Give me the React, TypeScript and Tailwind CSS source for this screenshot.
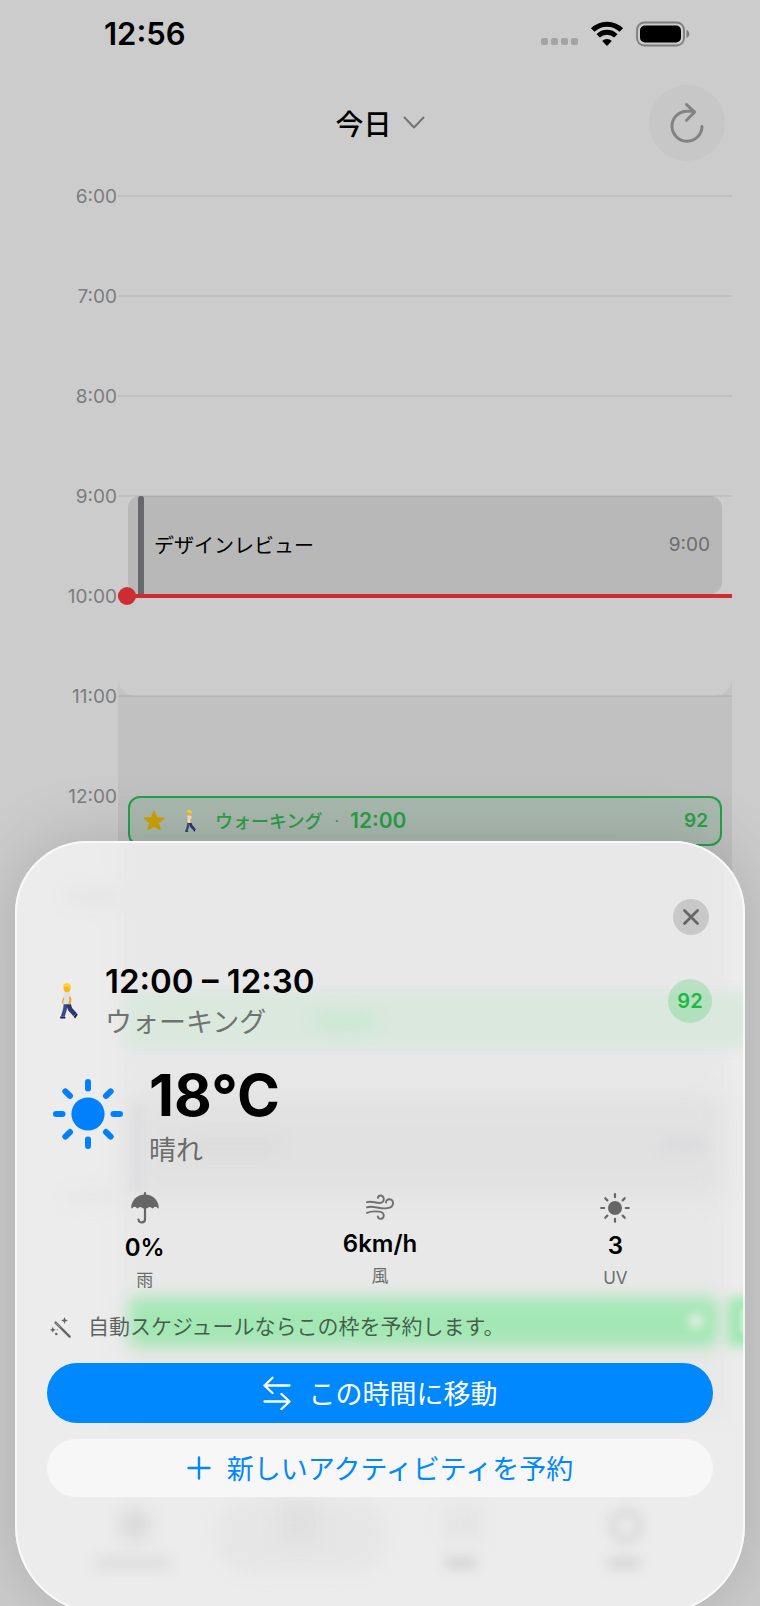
import type { ReactNode } from "react";

type HourRow = {
  label: string;
  kind?: "meeting" | "beforeShade" | "shade" | "activity";
};

const HOURS: HourRow[] = [
  { label: "6:00" },
  { label: "7:00" },
  { label: "8:00" },
  { label: "9:00", kind: "meeting" },
  { label: "10:00", kind: "beforeShade" },
  { label: "11:00", kind: "shade" },
  { label: "12:00", kind: "activity" },
];

const RAY_ANGLES = [0, 45, 90, 135, 180, 225, 270, 315];

// ── Icons ─────────────────────────────────────────────────────────────────────
function WifiIcon() {
  return (
    <svg width="34" height="26" viewBox="0 0 34 26" fill="none" aria-hidden="true">
      <path d="M2.700 9.100a20.200 20.200 0 0 1 28.600 0" stroke="#000" strokeWidth="5" />
      <path d="M8.200 14.900a12.400 12.400 0 0 1 17.600 0" stroke="#000" strokeWidth="4.800" />
      <path d="M12.200 19.900a6.800 6.800 0 0 1 9.600 0L17 24.900z" fill="#000" />
    </svg>
  );
}

function BatteryIcon() {
  return (
    <svg width="54" height="26" viewBox="0 0 54 26" fill="none" aria-hidden="true">
      <rect x="1" y="1.500" width="47" height="23" rx="7.500" stroke="#7d7d7d" strokeWidth="1.800" />
      <rect x="4" y="4.500" width="41" height="17" rx="5" fill="#000" />
      <path d="M50.500 9v8c1.800-.6 2.800-2.200 2.800-4s-1-3.400-2.800-4z" fill="#7d7d7d" />
    </svg>
  );
}

function RefreshIcon() {
  return (
    <svg
      width="34" height="42" viewBox="0 0 34 42" fill="none" aria-hidden="true"
      stroke="#828282" strokeWidth="3" strokeLinecap="round" strokeLinejoin="round"
    >
      <path d="M32 24.500a15 15 0 1 1-15-15.300h7" />
      <path d="M16.500 2.500l8 7.700-8 8" />
    </svg>
  );
}

function WalkerIcon({ className }: { className: string }) {
  return (
    <svg className={className} viewBox="0 0 18 36" fill="none" aria-hidden="true">
      <path d="M5.800 19.500L5 26l-2.200 7.500" stroke="#3a4b8c" strokeWidth="3.800" strokeLinejoin="round" />
      <path d="M7.800 19.500l2.400 6.700 5 5.500" stroke="#2b3873" strokeWidth="4.600" strokeLinejoin="round" />
      <path d="M.3 33.200l5 .8v1.600H.2z" fill="#1c1d3d" />
      <path d="M13.600 33.800l2.800-3.300 1.400 1-2.600 3.900z" fill="#1c1d3d" />
      <path d="M4.200 9.200c2-1 5.300-.8 6.300.6l.5 10.200-1.200 1.200H4L3.400 19z" fill="#dfe2e8" />
      <path d="M3.700 15l-1.300 5" stroke="#e9a81c" strokeWidth="1.200" strokeLinecap="round" />
      <path d="M9.900 14.500l.5 2.800-.9 3" stroke="#f3b01e" strokeWidth="2.200" strokeLinecap="round" />
      <ellipse cx="7" cy="5" rx="3.500" ry="4.200" fill="#f8b61d" />
      <path d="M3 3.600C3 .8 5.500 0 7.200.1c2.400.1 4 1.700 3.800 4.200-.1 1.500-.9 2-1.600 1.500-.5-1.600-1-2.400-2-2.500-1.500.6-3 .8-4.400.3z" fill="#ffd23c" />
    </svg>
  );
}

function SunIcon() {
  return (
    <svg className="mb-1" width="70" height="70" viewBox="0 0 70 70" aria-hidden="true">
      <circle cx="35" cy="35" r="16.600" fill="#0080fa" />
      {RAY_ANGLES.map((angle) => (
        <line
          key={angle}
          x1="35" y1="3" x2="35" y2="9.500"
          stroke="#0080fa" strokeWidth="6" strokeLinecap="round"
          transform={`rotate(${angle} 35 35)`}
        />
      ))}
    </svg>
  );
}

function UvIcon() {
  return (
    <svg width="30" height="31" viewBox="0 -1 30 31" aria-hidden="true">
      <circle cx="15" cy="15" r="7" fill="#666" />
      {RAY_ANGLES.map((angle) => (
        <line
          key={angle}
          x1="15" y1="1.200" x2="15" y2="4.200"
          stroke="#666" strokeWidth="2.200" strokeLinecap="round"
          transform={`rotate(${angle} 15 15)`}
        />
      ))}
    </svg>
  );
}

function UmbrellaIcon() {
  return (
    <svg width="28" height="33" viewBox="0 0 28 33" fill="none" aria-hidden="true">
      <path
        d="M14 2.500C6.200 2.500.4 8.300.2 15.600c0 1 .8 1.100 1.300.4 1.200-1.600 3-1.400 4.200 0 .5.600 1 .6 1.500 0 1.300-1.500 3-1.500 4.200 0 .4.500.8.600 1.300.300h2.600c.5.300.9.200 1.300-.300 1.200-1.500 2.900-1.500 4.200 0 .5.600 1 .6 1.500 0 1.200-1.400 3-1.600 4.200 0 .5.700 1.300.6 1.300-.4C27.600 8.300 21.800 2.500 14 2.500z"
        fill="#666"
      />
      <path d="M14 1.200v3M14 14v13.200c0 4.300-6.500 4.300-6.500.3" stroke="#666" strokeWidth="2.200" strokeLinecap="round" />
    </svg>
  );
}

function WindIcon() {
  return (
    <svg
      width="28" height="29" viewBox="0 -2 28 29" fill="none" aria-hidden="true"
      stroke="#707070" strokeWidth="1.900" strokeLinecap="round"
    >
      <path d="M1 8.200c4-1.700 8 .8 12.500.8 3.200 0 4.600-2 4.200-4.500C17.200 1 12.600.2 11.900 4" />
      <path d="M1 13.300c5.500-2.200 11.500 1.500 18.500 1.100 4.500-.2 7.500-2.200 7.500-5.200 0-5-7-5.300-7-.7" />
      <path d="M1 18.800c4.500-2 8.500-1.600 12-1.200 3.300.4 4.900 1.900 4.700 4.300-.3 3.800-5.300 4-5.900.5" />
    </svg>
  );
}

function WandIcon() {
  return (
    <svg width="21" height="21" viewBox="0 0 21 21" aria-hidden="true">
      <path d="M5.600 5.600l14 14" stroke="#666" strokeWidth="2.400" strokeLinecap="round" />
      <path d="M6 6l4 4" stroke="#999" strokeWidth="1" strokeLinecap="round" />
      <path d="M14.500 0l1 2.500 2.500 1-2.500 1-1 2.500-1-2.500-2.500-1 2.500-1z" fill="#666" />
      <path d="M2.800 9.800l.9 2.100 2.100.9-2.100.9-.9 2.100-.9-2.100-2.100-.9 2.100-.9z" fill="#666" />
      <circle cx="6.300" cy="17" r="1.300" fill="#666" />
      <circle cx="7.200" cy="12.800" r=".6" fill="#777" />
    </svg>
  );
}

function SwapIcon() {
  return (
    <svg
      width="28" height="34" viewBox="0 0 28 34" fill="none" aria-hidden="true"
      stroke="currentColor" strokeWidth="2.300" strokeLinecap="round" strokeLinejoin="round"
    >
      <path d="M26.500 9.500H1.500M9.500 1.700L1.500 9.500l8 7.500" />
      <path d="M1.500 25.500h25M18.500 18l8 7.500-8 7.500" />
    </svg>
  );
}

// ── Timeline ──────────────────────────────────────────────────────────────────
function HourContent({ kind }: { kind: HourRow["kind"] }) {
  if (kind === "meeting") {
    return (
      <div className="mx-[10px] flex h-[98px] items-center justify-between rounded-xl bg-[#b8b8b8] pl-[10px] pr-3">
        <div className="flex h-full items-center gap-[10px]">
          <span className="h-full w-[6px] rounded-t-sm bg-[#68686c]" />
          <span className="font-['Noto_Sans_CJK_JP',sans-serif] text-[20px]">デザインレビュー</span>
        </div>
        <span className="text-[19px] text-[#6c6c6f]">9:00</span>
      </div>
    );
  }
  if (kind === "beforeShade") {
    return (
      <div className="flex h-[100px] flex-col justify-end">
        <div className="bg-[#c3c3c3]">
          <div className="h-5 rounded-b-[18px] bg-[#ccc]" />
        </div>
      </div>
    );
  }
  if (kind === "shade") return <div className="h-full bg-[#c1c1c1]" />;
  if (kind === "activity") {
    return (
      <div className="h-[160px] bg-[#bfbfbf]">
        <div className="mx-[10px] flex h-[50px] items-center rounded-xl border-2 border-[#24a047] bg-[#aab9af] pl-[13px] pr-3 text-[#2a9f48]">
          <svg width="22" height="22" viewBox="0 0 22 22" aria-hidden="true">
            <path
              d="M11 1.200l2.700 6.500 7 .5-5.400 4.500 1.700 6.900-6-3.700-6 3.700 1.700-6.900L1.300 8.200l7-.5z"
              fill="#cda200" stroke="#cda200" strokeWidth="1.200" strokeLinejoin="round"
            />
          </svg>
          <WalkerIcon className="ml-5 h-[22px] w-[11px]" />
          <span className="ml-[19px] text-[18px] font-medium">ウォーキング</span>
          <span className="ml-3 text-[16px]">·</span>
          <span className="ml-[11px] text-[21px] font-semibold">12:00</span>
          <span className="ml-auto text-[19px] font-semibold">92</span>
        </div>
      </div>
    );
  }
  return null;
}

function Timeline() {
  return (
    <div className="pr-7">
      {HOURS.map((hour) => (
        <div key={hour.label} className="relative flex h-[100px]">
          <div className="-mt-[11px] w-[118px] shrink-0 pr-px text-right text-[19px] leading-6 text-[#7c7c7e]">
            {hour.label}
          </div>
          <div className="relative flex-1">
            <HourContent kind={hour.kind} />
            {hour.kind !== "activity" && <div className="absolute inset-x-0 -top-px h-[2px] bg-black/6" />}
            {hour.kind === "beforeShade" && (
              <div className="absolute inset-x-0 -top-[2px] h-1 bg-[#cd2d31]">
                <span className="absolute -top-[7px] left-0 size-[18px] rounded-full bg-[#cd2d31]" />
              </div>
            )}
          </div>
        </div>
      ))}
    </div>
  );
}

// Frosted shapes of the calendar and the tab bar showing through the sheet
function GlassBackdrop() {
  return (
    <div aria-hidden="true" className="pointer-events-none absolute inset-0 overflow-hidden rounded-[inherit]">
      <div className="absolute left-[104px] right-4 -top-5 h-[600px] bg-[#e8e8e8] blur-sm" />
      <div className="absolute left-[52px] top-[48px] h-4 w-[52px] bg-[#e5e5e5] blur-[8px]" />
      <div className="absolute left-[110px] -right-4 top-[151px] h-[56px] bg-[#dae8de] blur-[6px]" />
      <div className="absolute left-[300px] top-[170px] h-[20px] w-[60px] rounded-full bg-[#cbe7d2] blur-[8px]" />
      <div className="absolute left-[118px] right-6 top-[256px] h-[100px] rounded-xl bg-[#e1e1e2] blur-[12px]" />
      <div className="absolute left-[119px] top-[262px] h-[90px] w-2 bg-[#dcdcde] blur-[5px]" />
      <div className="absolute left-[175px] top-[300px] h-3 w-[90px] bg-[#dadadb] blur-[8px]" />
      <div className="absolute right-[40px] top-[298px] h-3 w-[44px] bg-[#dadadc] blur-[6px]" />
      <div className="absolute left-[52px] top-[350px] h-3 w-[52px] bg-[#e6e6e6] blur-[8px]" />
      <div className="absolute left-[114px] right-[27px] top-[456px] h-[50px] rounded-lg bg-[#a3e7b4] blur-[8px]" />
      <div className="absolute -right-5 top-[456px] h-[50px] w-[38px] rounded-lg bg-[#a3e7b4] blur-[6px]" />
      <div className="absolute right-[41px] top-[472px] size-4 rounded-full bg-[#dcefe0] blur-[5px]" />
      <div className="absolute right-0 top-[468px] h-6 w-1 bg-[#d6efdb] blur-[2px]" />

      <div className="absolute left-[200px] top-[656px] h-[78px] w-[172px] rounded-full bg-[#e6e6e6] blur-[8px]" />
      <div className="absolute left-[104px] top-[668px] size-8 rounded-full bg-[#d8d8d8] blur-[9px]" />
      <div className="absolute left-[80px] top-[716px] h-3 w-[76px] bg-[#dcdcdc] blur-[7px]" />
      <div className="absolute left-[264px] top-[662px] size-10 bg-[#e0e0e0] blur-[9px]" />
      <div className="absolute left-[428px] top-[664px] h-9 w-10 bg-[#e5e5e5] blur-[8px]" />
      <div className="absolute left-[430px] top-[716px] h-3 w-8 bg-[#d4d4d4] blur-[6px]" />
      <div className="absolute left-[593px] top-[667px] size-9 rounded-full border-8 border-[#d8d8d8] blur-[6px]" />
      <div className="absolute left-[593px] top-[716px] h-3 w-8 bg-[#d6d6d6] blur-[6px]" />
    </div>
  );
}

function Metric({ icon, value, label }: { icon: ReactNode; value: string; label: string }) {
  return (
    <div className="flex flex-1 flex-col items-center">
      {icon}
      <span className="mt-[7px] text-[24px] leading-8 font-semibold">{value}</span>
      <span className="mt-1 text-[17px] leading-6 text-[#6c6c6c]">{label}</span>
    </div>
  );
}

function SlotSheet() {
  return (
    <section className="absolute inset-x-[15px] -bottom-2 rounded-t-[72px] rounded-b-[88px] bg-[#ececec] px-8 pb-[117px] pt-[58px] shadow-[0_0_70px_rgba(0,0,0,0.16)]">
      <GlassBackdrop />
      <div aria-hidden="true" className="pointer-events-none absolute inset-0 rounded-[inherit] border-2 border-white/70" />

      <div className="relative">
        <div className="flex justify-end pr-1">
          <button aria-label="閉じる" className="flex size-9 items-center justify-center rounded-full bg-[#c8c8c8]">
            <svg width="16" height="16" viewBox="0 0 16 16" stroke="#666" strokeWidth="2.800" strokeLinecap="round" aria-hidden="true">
              <path d="M1.500 1.500l13 13M14.500 1.500l-13 13" />
            </svg>
          </button>
        </div>

        <div className="mt-6 flex items-center pr-[1px]">
          <WalkerIcon className="ml-[13px] h-9 w-[18px]" />
          <div className="ml-[27px]">
            <h2 className="text-[33px] leading-11 font-semibold">12:00 – 12:30</h2>
            <p className="text-[27px] leading-10 text-[#6f7370]">ウォーキング</p>
          </div>
          <span className="ml-auto flex size-11 items-center justify-center rounded-full bg-[#34c759]/24 text-[20px] font-semibold text-[#1cb841]">
            92
          </span>
        </div>

        <div className="mt-[22px] flex items-center pl-[6px]">
          <SunIcon />
          <div className="ml-[26px]">
            <p className="text-[58px] leading-[60px] font-bold">18°C</p>
            <p className="mt-[10px] text-[27px] leading-8 text-[#6b6b6b]">晴れ</p>
          </div>
        </div>

        <div className="mt-[25px] flex items-start gap-10">
          <Metric icon={<UmbrellaIcon />} value="0%" label="雨" />
          <Metric icon={<WindIcon />} value="6km/h" label="風" />
          <Metric icon={<UvIcon />} value="3" label="UV" />
        </div>

        <p className="mt-[19px] flex items-center gap-[17px] pl-[3px] text-[21px] leading-8 text-black/60">
          <WandIcon />
          自動スケジュールならこの枠を予約します。
        </p>

        <div className="mt-5 flex flex-col gap-4 font-['Noto_Sans_CJK_JP',sans-serif] text-[27px]">
          <button className="flex h-[60px] w-full items-center justify-center gap-[18px] rounded-full bg-[#0088ff] text-white">
            <SwapIcon />
            この時間に移動
          </button>
          <button className="flex h-[58px] w-full items-center justify-center gap-4 rounded-full bg-[#f7f7f7] text-[#0088ff]">
            <svg width="24" height="24" viewBox="0 0 24 24" stroke="currentColor" strokeWidth="2.400" strokeLinecap="round" aria-hidden="true">
              <path d="M12 1.500v21M1.500 12h21" />
            </svg>
            新しいアクティビティを予約
          </button>
        </div>
      </div>
    </section>
  );
}

export default function App() {
  return (
    <main
      lang="ja"
      className="relative min-h-screen overflow-hidden bg-[#ccc] font-['Inter','Noto_Sans_CJK_JP',sans-serif] text-black"
    >
      <header>
        <div className="flex h-[68px] items-center justify-between pl-[104px] pr-[70px]">
          <span className="text-[31px] font-semibold">12:56</span>
          <div className="flex items-center">
            <div className="mr-3 mt-[14px] flex gap-[3px]">
              {[0, 1, 2, 3].map((dot) => (
                <span key={dot} className="size-[7px] rounded-[2px] bg-[#a3a3a3]" />
              ))}
            </div>
            <WifiIcon />
            <span className="w-3" />
            <BatteryIcon />
          </div>
        </div>
        <div className="grid h-[109px] grid-cols-3 items-center px-[35px]">
          <button className="col-start-2 flex items-center justify-center gap-[11px] font-['Noto_Sans_CJK_JP',sans-serif] text-[28px] font-medium">
            今日
            <svg width="22" height="13" viewBox="0 0 22 13" fill="none" stroke="#747474" strokeWidth="2" strokeLinecap="round" strokeLinejoin="round" aria-hidden="true">
              <path d="M1.500 1.500L11 11.500l9.500-10" />
            </svg>
          </button>
          <button aria-label="更新" className="flex size-[76px] items-center justify-center justify-self-end rounded-full bg-[#c7c7c7]">
            <RefreshIcon />
          </button>
        </div>
      </header>
      <div className="pt-[19px]">
        <Timeline />
      </div>
      <SlotSheet />
    </main>
  );
}
